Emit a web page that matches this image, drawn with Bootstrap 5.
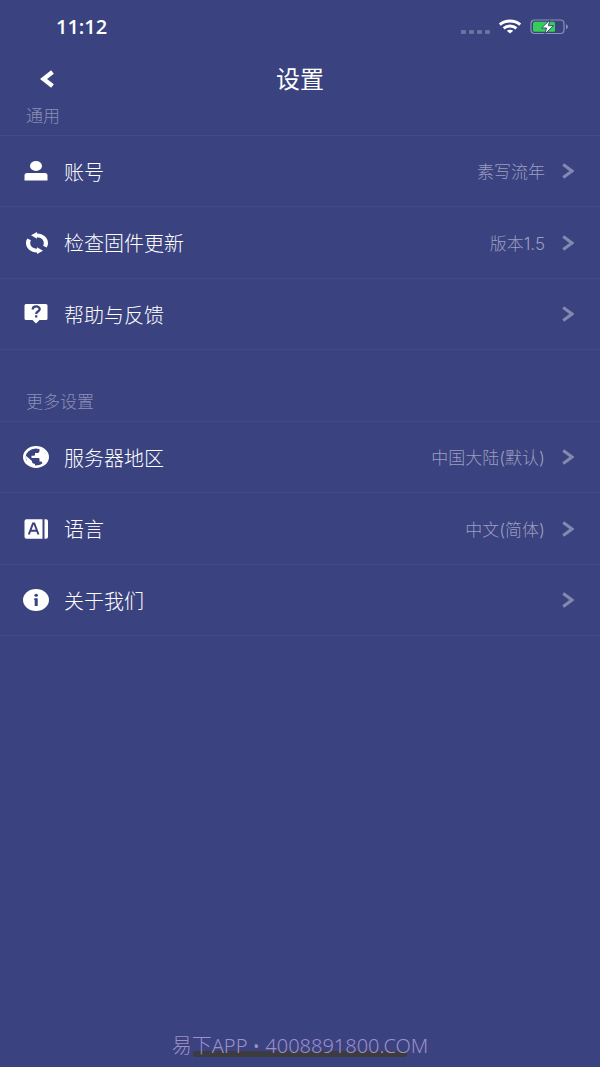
<!DOCTYPE html>
<html lang="zh-CN">
<head>
<meta charset="utf-8">
<meta name="viewport" content="width=device-width, initial-scale=1">
<title>设置</title>
<link rel="stylesheet" href="https://cdn.jsdelivr.net/npm/bootstrap@5.3.0/dist/css/bootstrap.min.css">
<style>
body{background:#3a427f;color:#fff;font-family:Inter,"Noto Sans CJK SC",sans-serif;font-weight:300}
svg{display:block;flex:none}
.status-bar{height:54px;padding:0 31px 0 56px}
.clock{font-family:"Open Sans",sans-serif;font-size:20px;font-weight:600;line-height:24px}
.signal{gap:3px;padding-top:9px;margin-right:8px}
.signal i{width:5px;height:4px;border-radius:1px;background:#6c72a2}
.title-bar{height:50px}
.title-bar h1{font-size:24px;line-height:36px;font-weight:400;padding-top:2px}
.back{left:36px;top:12px}
.section-label{font-size:17px;line-height:24px;padding:0 26px;color:#8b90b6;font-weight:300}
.first-label{padding-bottom:7px}
.next-label{padding-top:40px;padding-bottom:7px}
.settings{--bs-list-group-bg:transparent;--bs-list-group-border-color:#434a87;border-top:1px solid #434a87}
.settings .list-group-item,.settings .list-group-item:last-child{height:71px;padding:0 26px 0 23px;border-width:0 0 1px;color:#fff}
.settings .list-group-item:nth-child(even){height:72px}
.item-label{font-size:20px;line-height:30px;margin-left:15px;padding-top:3px}
.item-value{font-size:17px;line-height:26px;color:#9a9ec0;margin-right:17px;padding-top:2px}
.watermark{padding-bottom:6px}
.watermark p{font-family:"Noto Sans","Noto Sans CJK SC",sans-serif;font-size:20px;line-height:30px;color:#9e8fc9}
.home-bar{width:214px;height:6px;bottom:10px;border-radius:3px;background:#3c3c3e}
</style>
<script src="https://cdn.jsdelivr.net/npm/bootstrap@5.3.0/dist/js/bootstrap.bundle.min.js"></script>
</head>
<body class="d-flex flex-column min-vh-100">
<svg width="0" height="0" class="position-absolute" aria-hidden="true"><symbol id="chevron" viewBox="0 0 12 16"><path d="M1.200 1.500 10 8 1.200 14.500" fill="none" stroke="#8489b1" stroke-width="3"/></symbol></svg>
<div class="status-bar d-flex align-items-center">
  <span class="clock me-auto">11:12</span>
  <span class="signal d-flex"><i></i><i></i><i></i><i></i></span>
  <svg width="24" height="16" viewBox="0 0 24 16" fill="none" stroke="#fff" stroke-width="3"><path d="M1.800 5.700C7.500.800 16.500.800 22.200 5.700M5.600 9.300c3.700-3 9.100-3 12.800 0"/><path d="M8.800 11.800c1.900-1.300 4.500-1.300 6.400 0L12 14.500z" fill="#fff" stroke="none"/></svg>
  <svg class="ms-2" width="39" height="16" viewBox="0 0 39 16"><rect x="1" y="1" width="33" height="13.500" rx="3.500" fill="none" stroke="#8c91b8" stroke-width="1.200"/><rect x="3" y="2.800" width="22" height="10" rx="1.500" fill="#34cf57"/><path d="M36 5.300c2.500.800 2.500 4.200 0 5z" fill="#8c91b8"/><path d="M19.800 1 11.500 9h5l-1.500 6 8.500-8.300h-5z" fill="#fff" stroke="#3a427f"/></svg>
</div>
<header class="title-bar position-relative d-flex align-items-center justify-content-center">
  <button type="button" class="back btn border-0 p-1 position-absolute" aria-label="返回"><svg width="14" height="18" viewBox="0 0 14 18"><path d="M12.500 2 3.500 9l9 7" fill="none" stroke="#fff" stroke-width="4.400"/></svg></button>
  <h1 class="m-0">设置</h1>
</header>
<main>
<h2 class="section-label first-label m-0">通用</h2>
<div class="settings list-group list-group-flush">
  <a href="#account" class="list-group-item d-flex align-items-center">
    <svg width="26" height="22" viewBox="0 0 26 22" fill="#fff"><ellipse cx="13" cy="6" rx="6" ry="5"/><path d="M1.500 20.500V15.500q0-2.500 2.500-2.500h18q2.500 0 2.500 2.500v5z"/></svg>
    <span class="item-label me-auto">账号</span><span class="item-value">素写流年</span><svg width="12" height="16"><use href="#chevron"/></svg></a>
  <a href="#firmware" class="list-group-item d-flex align-items-center">
    <svg width="26" height="22" viewBox="0 0 26 22" fill="#fff"><path d="M8 3.200 14 0v1.500c6.300.2 11 4.100 11 9.500 0 1.700-.5 3.200-1.400 4.500l-3.500-1.700c.5-.8.700-1.700.7-2.800 0-3.200-2.800-5.600-6.800-5.800v1.500z"/><path d="M20 18.800 14 22v-1.500C7.700 20.300 3 16.400 3 11c0-1.700.5-3.200 1.400-4.500l3.500 1.700c-.5.800-.7 1.700-.7 2.800 0 3.200 2.800 5.600 6.800 5.800v-1.500z"/></svg>
    <span class="item-label me-auto">检查固件更新</span><span class="item-value">版本1.5</span><svg width="12" height="16"><use href="#chevron"/></svg></a>
  <a href="#help" class="list-group-item d-flex align-items-center">
    <svg width="26" height="22" viewBox="0 0 26 22"><path d="M3 1h20q1.500 0 1.500 1.500v13q0 1.500-1.500 1.500h-6.500L13 20.500l-3.500-3.500H3Q1.500 17 1.500 15.500v-13Q1.500 1 3 1z" fill="#fff"/><path d="M9.700 6.500c0-4 7-4 7-.4 0 2.500-3.500 2.300-3.500 4.800M13.200 12.300v2.300" fill="none" stroke="#3a427f" stroke-width="2.300"/></svg>
    <span class="item-label me-auto">帮助与反馈</span><svg width="12" height="16"><use href="#chevron"/></svg></a>
</div>
<h2 class="section-label next-label m-0">更多设置</h2>
<div class="settings list-group list-group-flush">
  <a href="#region" class="list-group-item d-flex align-items-center">
    <svg width="26" height="22" viewBox="0 0 26 22"><ellipse cx="13" cy="11" rx="11.700" ry="9.700" fill="#3a427f" stroke="#fff" stroke-width="2.600"/><path d="M17.500 2.500 21 5l3 5-1 5-3 3-1.500-2.500h-2V13q0-1-1-1H8.500V9.700h2.300q1.200 0 1.200-1V7h2.500q2 0 2-2V2.500zM2 9l7 6v1q0 1.500 3 2v2.500L5 18z" fill="#fff"/></svg>
    <span class="item-label me-auto">服务器地区</span><span class="item-value">中国大陆(默认)</span><svg width="12" height="16"><use href="#chevron"/></svg></a>
  <a href="#language" class="list-group-item d-flex align-items-center">
    <svg width="26" height="22" viewBox="0 0 26 22"><path d="M3.500 1.200h16v19.600h-16q-2 0-2-2V3.200q0-2 2-2zM21.500 1.200h1.500q2 0 2 2v15.600q0 2-2 2h-1.500z" fill="#fff"/><path d="m5.800 16.500 4.200-11h1.300l4.200 11M7.300 12.800h6.700" fill="none" stroke="#3a427f" stroke-width="2"/></svg>
    <span class="item-label me-auto">语言</span><span class="item-value">中文(简体)</span><svg width="12" height="16"><use href="#chevron"/></svg></a>
  <a href="#about" class="list-group-item d-flex align-items-center">
    <svg width="26" height="22" viewBox="0 0 26 22"><ellipse cx="13" cy="11" rx="13" ry="11" fill="#fff"/><ellipse cx="13.200" cy="6.200" rx="1.800" ry="1.500" fill="#3a427f"/><path d="M11.500 9.200h3.200V17h-3v-6h-.7z" fill="#3a427f"/></svg>
    <span class="item-label me-auto">关于我们</span><svg width="12" height="16"><use href="#chevron"/></svg></a>
</div>
</main>
<footer class="watermark position-relative mt-auto text-center">
  <div class="home-bar position-absolute start-50 translate-middle-x"></div>
  <p class="position-relative m-0">易下APP • 4008891800.COM</p>
</footer>
</body>
</html>
